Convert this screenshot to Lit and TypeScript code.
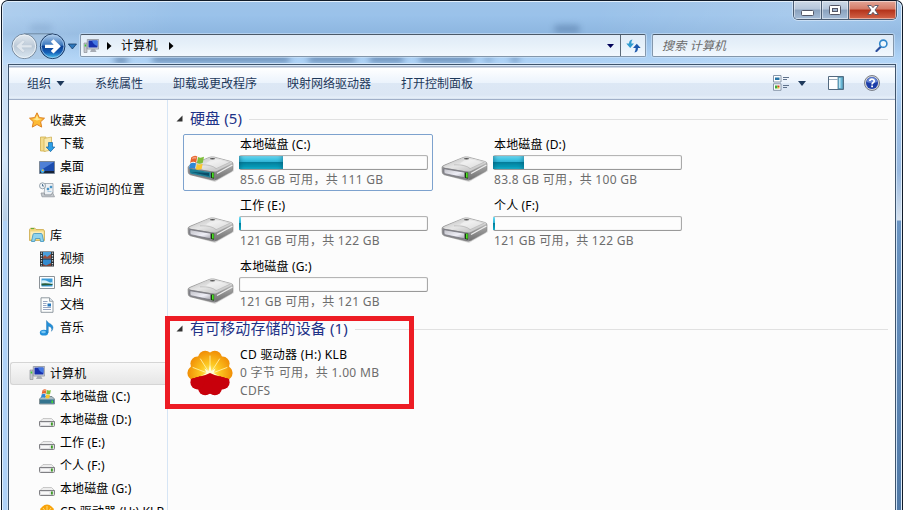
import { LitElement, html, svg, css, nothing } from "lit";
import { customElement, property } from "lit/decorators.js";

const drive = html`<svg width="48" height="30" viewBox="0 0 48 30">
  <defs>
    <linearGradient id="top" x1="0" y1="0" x2="1" y2="1"><stop offset="0" stop-color="#b5b5b5"/><stop offset=".45" stop-color="#e6e6e6"/><stop offset="1" stop-color="#b4b4b4"/></linearGradient>
    <linearGradient id="front" x1="0" y1="0" x2="1" y2="1"><stop offset="0" stop-color="#c2c2c8"/><stop offset=".6" stop-color="#eeeef6"/><stop offset="1" stop-color="#a5a5ad"/></linearGradient>
    <linearGradient id="side" x1="0" y1="0" x2="0" y2="1"><stop offset="0" stop-color="#dedede"/><stop offset=".5" stop-color="#9a9a9a"/><stop offset="1" stop-color="#6e6e6e"/></linearGradient>
  </defs>
  <path d="M3 21 28 28 47 17 45 13Z" fill="#0002"/>
  <path d="M1 13.5 Q1 12 3 11.3L22 3.5Q24 2.6 27 3L44 7.5Q46 8 46 10V15Q46 16.5 44.5 17.3L30 25.5Q28 26.5 25.5 26L3.5 20.8Q1.2 20 1.2 18Z" fill="url(#side)" stroke="#808080" stroke-width=".6"/>
  <path d="M2 12.3 22 3.7Q24 2.9 27 3.4L44.5 7.8Q46 8.6 44.5 9.6L30 17Q28 17.9 25.5 17.5L3.5 13.8Z" fill="url(#top)"/>
  <path d="M19 9.5 26 4.2 42 8.2 30 14.5Q27 12.2 19 9.5Z" fill="#fff6"/>
  <path d="M13 10.8Q25 10.5 29 14.7L43 8.2" fill="none" stroke="#b0b0b0" stroke-width=".6"/>
  <path d="M1.7 13.5 26 17.6Q28.2 18 28.2 20V25.9L3.500 20.6Q1.7 20 1.7 18Z" fill="#8b8b90"/>
  <path d="M3 14.7 23.5 18.2V23.8L4 19.7Q3 19.5 3 18Z" fill="url(#front)" stroke="#66666f" stroke-width=".6"/>
  <path d="M30 19.5 45.5 11" stroke="#ededed" stroke-width="1.4"/>
  <path d="M24 18.5h3.2v6.2L24 24Z" fill="#173a0c"/><path d="M25 18.8h1.7v5L25 23.4Z" fill="#4be024"/>
  <ellipse cx="25.5" cy="4.8" rx="2.6" ry=".8" fill="#555"/>
</svg>`;

const flag = svg`<path d="M3.5 3Q7 .3 9.5 2.3L8.4 8.5Q5.500 6.700 2.300 8.700Z" fill="#e8642c"/>
  <path d="M10.200 2.700Q12.800 4.200 16.200 2.600L15 8.600Q12 10.200 9.100 8.900Z" fill="#7fbe3a"/>
  <path d="M2.200 9.500Q5.300 7.600 8.200 9.400L7.200 14.500Q4.300 12.900 1.200 14.500Z" fill="#2f87d6"/>
  <path d="M9 9.700Q11.900 11 14.900 9.500L13.800 14.800Q11 16.200 8 15Z" fill="#fbc62e"/>
  <path d="M4.500 3.500Q7 2 8.700 3L8.400 4.500Q6 4 4.200 5Z" fill="#fff6"/>`;

const systemDrive = html`<div class="stack">${drive}<svg class="over" width="48" height="30" viewBox="0 0 48 30">
  <path d="M3 14.7 23.500 18.200V23.800L4 19.700Q3 19.500 3 18Z" fill="#1d7f96"/><path d="M4 18 22 22V19Z" fill="#0a4d68"/>
  <g transform="translate(.8 .2)">${flag}</g></svg></div>`;

function petroPaths() {
  const petals = Array.from({ length: 10 }, (_, i) => {
    const a = ((i * 36 + 18) * Math.PI) / 180;
    return { x: 24 + Math.sin(a) * 15.6, y: 24 - Math.cos(a) * 16 };
  });
  return html`<svg width="48" height="48" viewBox="0 0 48 48">
    <defs>
      <radialGradient id="sun" gradientUnits="userSpaceOnUse" cx="24" cy="24" r="23"><stop offset="0" stop-color="#fff27a"/><stop offset=".4" stop-color="#fdc821"/><stop offset="1" stop-color="#f08c05"/></radialGradient>
      <clipPath id="up"><path d="M0 0H48V32L24 26 0 32Z"/></clipPath>
      <clipPath id="down"><path d="M0 31.500Q9 29 14 27.500Q20 26 24 24Q28 26 34 27.500Q39 29 48 31.500V48H0Z"/></clipPath>
    </defs>
    <g clip-path="url(#up)" fill="url(#sun)"><circle cx="24" cy="24" r="20.300"/>${petals.map((p) => svg`<circle cx=${p.x} cy=${p.y} r="7"/>`)}</g>
    <g stroke="#fff0a4" stroke-width=".9" stroke-linecap="round"><path d="M24 25V7M24 25 14.500 10M24 25 33.500 10M24 25 7 18.500M24 25 41 18.500"/></g>
    <path d="M15 27 20.500 24 18.500 19.500 22.500 22 24 16 25.500 22 29.500 19.500 27.500 24 33 27 24 25Z" fill="#fffbd8"/>
    <g clip-path="url(#down)" fill="#c8000b"><circle cx="24" cy="24" r="20.300"/>${petals.map((p) => svg`<circle cx=${p.x} cy=${p.y} r="7"/>`)}</g>
  </svg>`;
}

const smallDrive = svg`<path d="M1 9.500 4 6.500H12.500L15.500 9.500Z" fill="#ededed" stroke="#b4b4b4" stroke-width=".7"/>
  <path d="M.5 9.500H15.500V13.500Q15.500 14.500 14.500 14.500H1.500Q.5 14.500 .5 13.500Z" fill="#e0e0e2" stroke="#808084" stroke-width="1"/>
  <path d="M2 11H10.500V13H2Z" fill="#f8f8f8"/><path d="M12 10.500h1.800v3h-1.800Z" fill="#3d9c25"/>`;

const computer = svg`<path d="M1 5h3v9.500H1Z" fill="#c5c8cd" stroke="#83878e" stroke-width=".6"/><path d="M1.700 6.500h1.500v2H1.700Z" fill="#35ce30"/>
  <path d="M4.300 1.500H15.700V11H4.300Z" fill="#d5d9df" stroke="#8a909a" stroke-width=".8"/><path d="M5.500 2.600H14.500V9.500H5.500Z" fill="#1730ad"/>
  <path d="M9 2.600H14.500V8Q10 7 9 2.600Z" fill="#4377e2"/><path d="M8.500 11h3.500l1.500 3H7Z" fill="#a7acb5"/>`;

const icons: Record<string, unknown> = {
  star: svg`<path d="M8 .8 10.300 5.600 15.500 6.200 11.600 9.800 12.700 15.100 8 12.500 3.300 15.100 4.400 9.800 .5 6.200 5.700 5.600Z" fill="#fdbb35" stroke="#dd8122" stroke-width="1"/><path d="M8 3 9.500 6.500 13 7 8 8.500 3.500 7 6.500 6.500Z" fill="#ffe890"/>`,
  download: svg`<path d="M1.500 1H7V15H1.500Z" fill="#f3dc8c" stroke="#cfae4d" stroke-width=".8"/><path d="M5 2.500 12.500 1V14L5 15.500Z" fill="#f8e9ae" stroke="#d2b459" stroke-width=".8"/><path d="M9.500 6.500h4v4.500h2.300L11.500 15.700 7.200 11h2.300Z" fill="#2c9ee6" stroke="#17649f" stroke-width=".7"/>`,
  desktop: svg`<path d="M.5 2.500H15.500V14.500H.5Z" fill="#1c4daf" stroke="#7a8797"/><path d="M1 3H15L2 11H1Z" fill="#4f80d6"/><path d="M1 12H15V14H1Z" fill="#172337"/><circle cx="3.500" cy="12" r="2" fill="#48aee8"/><path d="M3 10.500h1.500V12H3Z" fill="#ffb735"/>`,
  recent: svg`<path d="M6 1.500H14V11L12 13H5Z" fill="#edf1f5" stroke="#96a0aa" stroke-width=".8"/><path d="M2 11H5.500V13H12L13.500 10.500 15.500 14.800H3Z" fill="#c4c8cc" stroke="#8d9299" stroke-width=".7"/><circle cx="3.500" cy="3.800" r="3" fill="#eef3f7" stroke="#84909b" stroke-width=".8"/><path d="M3.500 2V4H5" stroke="#355c7e" fill="none" stroke-width=".8"/><path d="M8 6h2v2H8ZM11 4h2v2h-2ZM8.500 9.500h4" fill="#2f8ac9" stroke="#6ea6c8" stroke-width=".5"/>`,
  library: svg`<path d="M.5 2.500 1.500 1.200H6L7 2.500H14.500L15.500 4V13.500H.5Z" fill="#f1d77d" stroke="#cba94c" stroke-width=".8"/><path d="M1.500 4.500H14.500V12H1.500Z" fill="#faedb9"/><path d="M2.500 14.500 4 7.500Q4.200 6.500 5.200 6.500H12Q13 6.500 13.200 7.500L14.700 14.500H11.500L11 11.500H6.500L5.700 14.500Z" fill="#8ed3ef" stroke="#3d92bb" stroke-width=".8"/><path d="M2 1.600h3" stroke="#58ad35"/>`,
  video: svg`<path d="M1 .5H15V15.500H1Z" fill="#272d32"/><path d="M4 1H12V7.500H4Z" fill="#4a9fdc"/><path d="M4 8.500H12V15H4Z" fill="#328bd0"/><path d="M4 6 6 4 8 6 12 3V7.500H4Z" fill="#9b4e3d"/><path d="M4 13 7 14.500 12 12V15H4Z" fill="#814337"/><path d="M2.500 1.500V15M13.500 1.500V15" stroke="#dce3e7" stroke-width="1.300" stroke-dasharray="1.300 1.300"/>`,
  picture: svg`<path d="M.5 2.500H15.500V14.500H.5Z" fill="#fff" stroke="#8b9298"/><path d="M2.500 4.500H13.500V12.500H2.500Z" fill="#3a9bd8"/><path d="M2.500 6.500Q6 5.500 9 7.500T13.500 7.500V10H2.500Z" fill="#d7f1f8"/><path d="M2.500 9.500Q8 9 13.500 10V11L2.500 11.500Z" fill="#275b39"/>`,
  document: svg`<path d="M2 .8H10.500L14 4.300V15.300H2Z" fill="#fdfefe" stroke="#848e96" stroke-width=".9"/><path d="M10.500 .8V4.300H14" fill="#dce5ec" stroke="#848e96" stroke-width=".8"/><path d="M4 4.500H8.500M4 6.500H7.500M4 8.500H7.500M4 10.500H12M4 12.500H12" stroke="#7d91b5" stroke-width=".8"/><path d="M8.500 6.500H12V9.500H8.500Z" fill="#2577bd"/>`,
  music: svg`<ellipse cx="5" cy="12.700" rx="4.200" ry="2.900" fill="#2390da"/><path d="M7.500 12.500V.5Q9 3 12 4.300Q15.800 7 12.500 11.300Q13.800 7 9.300 6.200V12.500Z" fill="#2390da" stroke="#1869a6" stroke-width=".4"/><ellipse cx="4.500" cy="12" rx="2.300" ry="1.200" fill="#79c6f3"/>`,
  computer,
  sysdrive: svg`<path d="M.5 10 3 7.500H13L15.500 10V15H.5Z" fill="#a9bcc4" stroke="#6a7b82" stroke-width=".8"/><path d="M1 10.500H15V14.500H1Z" fill="#35748f"/><path d="M12.500 11.500h1.500v2.500h-1.500Z" fill="#44db32"/><g transform="translate(1.200 -.8) scale(.66)">${flag}</g>`,
  drive: smallDrive,
  cd: svg`<path d="M8 .5 10.500 1 12.500 2.500 14.500 4.500 15.500 8 14.500 11 1.500 11 .5 8 1.500 4.500 3.500 2.500 5.500 1Z" fill="#f8a30b"/><path d="M8 9V2M8 9 4 4M8 9 12 4" stroke="#fff1a0" stroke-width=".7"/><path d="M1 10 8 8.500 15 10 12 15H4Z" fill="#c8000b"/>`,
};

@customElement("nav-row")
class NavRow extends LitElement {
  @property() icon = "";
  @property() label = "";
  @property({ type: Boolean }) child = false;
  @property({ type: Boolean }) selected = false;
  static styles = css`
    :host { display: block; height: 23px; flex: none; }
    .row { box-sizing: border-box; height: 23px; display: flex; align-items: center; gap: 5px; padding-left: 18px; border: 1px solid transparent; border-right: 0; white-space: nowrap; }
    .child { padding-left: 28px; }
    .selected { border-color: #d5d5d5; border-radius: 3px 0 0 3px; background: linear-gradient(#f8f8f8, #e6e6e6); }
    svg { flex: none; margin-bottom: 1px; }
    .child svg { margin-bottom: 0; }
    span { line-height: 19px; letter-spacing: .12px; }
  `;
  render() {
    return html`<div class="row ${this.child ? "child" : ""} ${this.selected ? "selected" : ""}">
      ${this.icon ? html`<svg width="16" height="16" viewBox="0 0 16 16">${icons[this.icon]}</svg><span>${this.label}</span>` : nothing}
    </div>`;
  }
}

@customElement("drive-tile")
class DriveTile extends LitElement {
  @property() label = "";
  @property() info = "";
  @property({ type: Number }) used = 0;
  @property({ type: Boolean }) system = false;
  static styles = css`
    :host { display: block; }
    .tile { box-sizing: border-box; width: 250px; height: 57px; padding: 1px 0 0 3px; border: 1px solid transparent; border-radius: 2px; display: flex; }
    .on { border-color: #7da2ce; }
    .pic { width: 52px; padding-top: 18px; }
    .stack { position: relative; height: 30px; }
    .over { position: absolute; left: 0; top: 0; }
    svg { display: block; }
    .name, .info { padding-left: 1px; white-space: nowrap; }
    .name { height: 19px; line-height: 17px; letter-spacing: .16px; }
    .info { height: 19px; line-height: 19px; color: #6d6d6d; letter-spacing: .28px; }
    .bar { box-sizing: border-box; width: 189px; height: 15px; border: 1px solid #a9a9a9; border-top-color: #b5b5b5; border-bottom-color: #999; border-radius: 2px; background: #fdfdfd; box-shadow: inset 0 0 1px #aaa; display: flex; }
    .fill { margin: 0 0 0 -1px; background: linear-gradient(#7bdcf2 0, #48cbe8 20%, #2fb2d4 45%, #047d9a 50%, #0598b5 80%, #1fb3cc 100%); }
    .wide { box-shadow: inset 4px 0 5px -3px #06506b99, inset -4px 0 5px -3px #06506b88; }
  `;
  render() {
    return html`<div class="tile ${this.system ? "on" : ""}">
      <div class="pic">${this.system ? systemDrive : drive}</div>
      <div>
        <div class="name">${this.label}</div>
        <div class="bar">${this.used ? html`<div class="fill ${this.used > 10 ? "wide" : ""}" style="width:${this.used}px"></div>` : nothing}</div>
        <div class="info">${this.info}</div>
      </div>
    </div>`;
  }
}

@customElement("app-root")
class AppRoot extends LitElement {
  static styles = css`
    :host { display: block; width: 905px; height: 512px; overflow: hidden; background: #fff; font: 12px "Noto Sans", "Noto Sans CJK SC", sans-serif; color: #000; }
    svg { display: block; flex: none; }
    .window { position: relative; box-sizing: border-box; width: 902px; height: 510px; margin-left: 1px; overflow: hidden; border: 1px solid #101a28; border-bottom: 0; border-radius: 7px 7px 0 0; display: flex; flex-direction: column;
      background: linear-gradient(100deg, #fff3 0, #fff0 18%, #fff0 60%, #fff2 80%, #fff0), linear-gradient(#9dc2e8 0, #9ac2ea 14px, #8db6e0 33px, #a6cdf3 54px, #b2d5f8 64px, #9cc0e8 110px, #93b5de 170px, #d5e0ec 219px, #6590c0 220px, #4f78a6 100%); }
    .edge { position: absolute; left: 0; top: 220px; width: 7px; bottom: 0; background: #b0d2f7; }
    .leftglow { position: absolute; left: 0; top: 64px; width: 7px; height: 156px; background: linear-gradient(#c5daf0, #d2e6fa 60%, #b9cfe6); }
    .rim { position: absolute; inset: 0; border: 1px solid #e2effb; border-bottom: 0; border-radius: 6px 6px 0 0; }
    .blob { position: absolute; height: 8px; border-radius: 4px; background: #3c5f8c; filter: blur(3px); opacity: .55; }
    .b1 { left: 112px; top: 55px; width: 14px; } .b2 { left: 150px; top: 54px; width: 138px; } .b3 { left: 306px; top: 54px; width: 48px; }
    .b4 { left: 367px; top: 54px; width: 35px; } .b5 { left: 417px; top: 54px; width: 55px; } .b6 { left: 482px; top: 54px; width: 9px; opacity: .3; }
    .b7 { left: 508px; top: 54px; width: 10px; opacity: .4; } .b8 { left: 552px; top: 24px; width: 26px; opacity: .4; } .b9 { left: 28px; top: 23px; width: 22px; opacity: .15; }
    .caption { position: relative; height: 33px; display: flex; justify-content: flex-end; align-items: flex-start; padding-right: 5px; }
    .buttons { box-sizing: border-box; height: 19px; display: flex; border: 1px solid #4b5c72; border-top: 0; border-radius: 0 0 5px 5px; overflow: hidden; box-shadow: 0 0 0 1px #e2effb99; }
    .btn { box-sizing: border-box; width: 27px; display: flex; align-items: center; justify-content: center; border-right: 1px solid #4b5c72; background: linear-gradient(#cdd9e7 0, #b4c5da 45%, #8aa1bd 50%, #a6bdd8 100%); box-shadow: inset 0 0 0 1px #fff7; }
    .min { width: 28px; padding-top: 5px; }
    .close { width: 47px; border-right: 0; background: linear-gradient(#e3a697 0, #d47a66 45%, #b3321a 50%, #d4654a 100%); }
    .nav { position: relative; height: 30px; display: flex; align-items: flex-start; padding-left: 9px; }
    .round { width: 66px; height: 27px; margin: -1px -3px 0 0; }
    .addr, .search { box-sizing: border-box; height: 23px; border: 1px solid #8497ab; border-top-color: #4b5968; border-radius: 2px; background: linear-gradient(#dfebf7, #e6f0f9 45%, #f2f8fe); box-shadow: 0 0 0 1px #d6e9fb88; display: flex; align-items: center; }
    .addr { width: 566px; margin: 0 1px 0 6px; }
    .crumb { flex: 1; display: flex; align-items: center; padding-left: 2px; }
    .crumb .a1 { margin-left: 8px; } .crumb .t { margin: 0 11px 0 9px; line-height: 18px; letter-spacing: .2px; } .crumb .down { margin-left: auto; margin-right: 6px; }
    .refresh { width: 24px; height: 21px; border-left: 1px solid #5b6978; display: flex; align-items: center; justify-content: center; }
    .search { width: 242px; margin-left: 5px; padding: 0 5px 0 9px; justify-content: space-between; color: #6b6b6b; font-style: italic; }
    .search span { margin-bottom: 1px; letter-spacing: .2px; }
    .frame { position: relative; box-sizing: border-box; width: 888px; height: 446px; margin-left: 6px; border: 1px solid #3f546c; border-bottom: 0; background: #fcfcfc; box-shadow: 0 0 0 1px #cfe3f8; display: flex; flex-direction: column; }
    .tools { box-sizing: border-box; height: 35px; flex: none; display: flex; align-items: center; padding: 1px 15px 0 18px; color: #1e395b; border-bottom: 1px solid #a0afc8; border-top: 1px solid #d9e8f7;
      background: linear-gradient(#a5b4cb 0, #a5b4cb 1px, #fff 2px, #ebf3fc 17px, #dde8f5 17px, #dbe6f4 29px, #e6eff9 32px, #cfdcec 33px); }
    .tools span { margin-right: 30px; white-space: nowrap; } .tools .org { margin-right: 5px; } .tools .tri { margin-right: 30px; }
    .views { margin-left: auto; display: flex; align-items: center; }
    .views .menu { margin: 0 22px 0 9px; } .views .help { margin-left: 20px; }
    .body { flex: 1; display: flex; min-height: 0; }
    .side { box-sizing: border-box; width: 159px; padding: 9px 0 0 1px; border-right: 1px solid #d6e5f5; display: flex; flex-direction: column; overflow: hidden; }
    .main { flex: 1; padding: 9px 7px 0 8px; }
    .head { height: 20px; display: flex; align-items: center; gap: 7px; color: #1e3287; font-size: 15px; white-space: nowrap; }
    .head svg { margin-bottom: 2px; }
    .head span { line-height: 20px; margin-bottom: 2px; letter-spacing: .1px; }
    .head i { flex: 1; height: 1px; background: #e1e1e1; }
    .grid { display: grid; grid-template-columns: 250px 250px; gap: 4px; padding: 5px 0 6px 7px; }
    .cd { display: flex; padding: 7px 0 0 10px; gap: 7px; }
    .cd svg { margin-top: 3px; }
    .cd .petro { width: 47px; }
    .cd p { margin: 0; line-height: 18px; color: #6d6d6d; letter-spacing: .32px; } .cd .n { color: #000; }
    .mark { position: absolute; box-sizing: border-box; left: 165px; top: 316px; width: 249px; height: 93px; border: 5px solid #ed1c24; }
  `;
  render() {
    const tri = (color: string) => html`<svg class="tri" width="9" height="5" viewBox="0 0 9 5"><path d="M.5 0h8L4.500 5Z" fill=${color}/></svg>`;
    const arrow = (c: string) => html`<svg class=${c} width="5" height="8" viewBox="0 0 5 8"><path d="M0 0 4.500 4 0 8Z" fill="#000"/></svg>`;
    const mark = html`<svg width="7" height="7" viewBox="0 0 7 7"><path d="M6.500 .5V6.500H.5Z" fill="#333"/></svg>`;
    return html`
    <div class="window">
      <div class="leftglow"></div><div class="edge"></div>
      ${[1, 2, 3, 4, 5, 6, 7, 8, 9].map((n) => html`<div class="blob b${n}"></div>`)}
      <div class="rim"></div>
      <div class="caption"><div class="buttons">
        <div class="btn min"><svg width="13" height="6"><rect x=".5" y=".5" width="12" height="5" rx="1" fill="#fff" stroke="#535666"/></svg></div>
        <div class="btn"><svg width="12" height="10"><rect x=".5" y=".5" width="11" height="9" rx="1" fill="#fff" stroke="#535666"/><rect x="3.500" y="3.500" width="5" height="3" fill="#9fb5d0" stroke="#535666"/></svg></div>
        <div class="btn close"><svg width="12" height="10" viewBox="0 0 12 10"><path d="M.7 .5H4.200L6 2.700 7.800 .5H11.300L8 5 11.300 9.500H7.800L6 7.300 4.200 9.500H.7L4 5Z" fill="#fff" stroke="#535666" stroke-width=".9"/></svg></div>
      </div></div>
      <div class="nav">
        <svg class="round" viewBox="0 0 66 27">
          <defs><linearGradient id="bk" x1="0" y1="0" x2="0" y2="1"><stop offset="0" stop-color="#e4eaf0"/><stop offset=".5" stop-color="#bccad8"/><stop offset="1" stop-color="#dbe7f1"/></linearGradient>
          <linearGradient id="fw" x1="0" y1="0" x2="0" y2="1"><stop offset="0" stop-color="#b4d0ee"/><stop offset=".45" stop-color="#3c77bd"/><stop offset=".5" stop-color="#0b3f93"/><stop offset=".75" stop-color="#1660b7"/><stop offset="1" stop-color="#4fcdf5"/></linearGradient></defs>
          <path d="M13.500 1H42V4Q28 8 28 13T42 23V26H13.500Z" fill="#a9c3de" opacity=".6"/><path d="M13 .8H42" stroke="#5d7288" stroke-width=".7"/>
          <circle cx="13.300" cy="13.300" r="12.300" fill="url(#bk)" stroke="#74879b"/><circle cx="13.300" cy="13.300" r="11.300" fill="none" stroke="#edf3f8"/>
          <path d="M5 13.300 12 6.800 14 8.800 11 11.800H21V14.800H11L14 17.800 12 19.800Z" fill="#dfe6ed" stroke="#b4c3d1" stroke-width=".5"/>
          <circle cx="41.600" cy="13.300" r="12.300" fill="url(#fw)" stroke="#1f3b63"/><circle cx="41.600" cy="13.300" r="11.300" fill="none" stroke="#a8cbed" stroke-width=".8"/>
          <path d="M49.800 13.300 42.500 6.300 39.800 8.800 42.700 11.700H34V15H42.700L39.800 17.900 42.500 20.400Z" fill="#fff"/>
          <path d="M57.300 11H65.500L61.400 16Z" fill="#2d78bd" stroke="#173c68" stroke-width=".8"/>
        </svg>
        <div class="addr"><div class="crumb">
          <svg width="16" height="16" viewBox="0 0 16 16">${computer}</svg>${arrow("a1")}<span class="t">计算机</span>${arrow("a2")}
          <svg class="down" width="7" height="4"><path d="M0 0h7L3.500 4Z" fill="#000058"/></svg>
        </div><div class="refresh"><svg width="15" height="14" viewBox="0 0 15 14"><path d="M6.500 .5Q3 1 3 4.500H.3L4.200 9 8 4.500H5.300Q5.300 2 6.500 .5Z" fill="#2f9bcf"/><path d="M8.500 13.500Q12 13 12 9H14.700L10.800 4.700 7 9H9.700Q9.700 11.700 8.500 13.500Z" fill="#1d58ad"/></svg></div></div>
        <div class="search"><span>搜索 计算机</span><svg width="13" height="13" viewBox="0 0 13 13"><path d="M6 7.500 1.500 12" stroke="#2b4d9c" stroke-width="2.200" stroke-linecap="round"/><circle cx="8.300" cy="4.700" r="3.600" fill="#eff8fe" stroke="#3187cb" stroke-width="1.600"/></svg></div>
      </div>
      <div class="frame">
        <div class="tools"><span class="org">组织</span>${tri("#1e395b")}<span>系统属性</span><span>卸载或更改程序</span><span>映射网络驱动器</span><span>打开控制面板</span>
          <div class="views">
            <svg width="16" height="16" viewBox="0 0 16 16"><g fill="#fff" stroke="#8796a9"><path d="M.5 .5h7.500v6.500H.5ZM.5 8.800h7.500v6.500H.5Z"/></g><path d="M2 2.500h4.500v2.500H2Z" fill="#2674a6"/><path d="M2 10.500h2.500v3H2Z" fill="#3faa38"/><path d="M4.500 10.500h2v1.500h-2Z" fill="#d53e28"/><path d="M4.500 12h2v1.500h-2Z" fill="#dfb729"/><path d="M10 2.500h6M10 4.500h4M10 10.500h6M10 12.500h4" stroke="#60738c"/></svg>
            <svg class="menu" width="8" height="5"><path d="M0 0h8L4 5Z" fill="#1e395b"/></svg>
            <svg width="16" height="14" viewBox="0 0 16 14"><path d="M.5 .5h15v13H.5Z" fill="#fff" stroke="#52697f"/><path d="M1 3.500H9.500" stroke="#9aabbb"/><path d="M10 1h5v12h-5Z" fill="#68b6d5" stroke="#4e7990" stroke-width=".8"/><path d="M11 2h1.500v10H11Z" fill="#b9e3f1"/></svg>
            <svg class="help" width="16" height="16" viewBox="0 0 16 16"><circle cx="8" cy="8" r="7.500" fill="#d1d4d8" stroke="#6f747d" stroke-width=".9"/><circle cx="8" cy="8" r="6" fill="#1c3da8"/><path d="M2.500 7Q8 9 13.500 7Q12.500 2.300 8 2.300T2.500 7Z" fill="#6685d4"/><path d="M5.800 6Q6 4.200 8 4.200T10.300 6Q10.300 7 9 7.700 8.100 8.300 8.100 9.400" fill="none" stroke="#fff" stroke-width="1.700"/><path d="M7.200 10.500h1.800v1.700H7.200Z" fill="#fff"/></svg>
          </div>
        </div>
        <div class="body">
          <div class="side">
            <nav-row icon="star" label="收藏夹"></nav-row>
            <nav-row child icon="download" label="下载"></nav-row>
            <nav-row child icon="desktop" label="桌面"></nav-row>
            <nav-row child icon="recent" label="最近访问的位置"></nav-row>
            <nav-row></nav-row>
            <nav-row icon="library" label="库"></nav-row>
            <nav-row child icon="video" label="视频"></nav-row>
            <nav-row child icon="picture" label="图片"></nav-row>
            <nav-row child icon="document" label="文档"></nav-row>
            <nav-row child icon="music" label="音乐"></nav-row>
            <nav-row></nav-row>
            <nav-row selected icon="computer" label="计算机"></nav-row>
            <nav-row child icon="sysdrive" label="本地磁盘 (C:)"></nav-row>
            <nav-row child icon="drive" label="本地磁盘 (D:)"></nav-row>
            <nav-row child icon="drive" label="工作 (E:)"></nav-row>
            <nav-row child icon="drive" label="个人 (F:)"></nav-row>
            <nav-row child icon="drive" label="本地磁盘 (G:)"></nav-row>
            <nav-row child icon="cd" label="CD 驱动器 (H:) KLB"></nav-row>
          </div>
          <div class="main">
            <div class="head">${mark}<span>硬盘 (5)</span><i></i></div>
            <div class="grid">
              <drive-tile system label="本地磁盘 (C:)" info="85.6 GB 可用，共 111 GB" used="44"></drive-tile>
              <drive-tile label="本地磁盘 (D:)" info="83.8 GB 可用，共 100 GB" used="31"></drive-tile>
              <drive-tile label="工作 (E:)" info="121 GB 可用，共 122 GB" used="2"></drive-tile>
              <drive-tile label="个人 (F:)" info="121 GB 可用，共 122 GB" used="2"></drive-tile>
              <drive-tile label="本地磁盘 (G:)" info="121 GB 可用，共 121 GB"></drive-tile>
            </div>
            <div class="head">${mark}<span>有可移动存储的设备 (1)</span><i></i></div>
            <div class="cd"><div class="petro">${petroPaths()}</div><div><p class="n">CD 驱动器 (H:) KLB</p><p>0 字节 可用，共 1.00 MB</p><p>CDFS</p></div></div>
          </div>
        </div>
      </div>
      </div>
    <div class="mark"></div>`;
  }
}
